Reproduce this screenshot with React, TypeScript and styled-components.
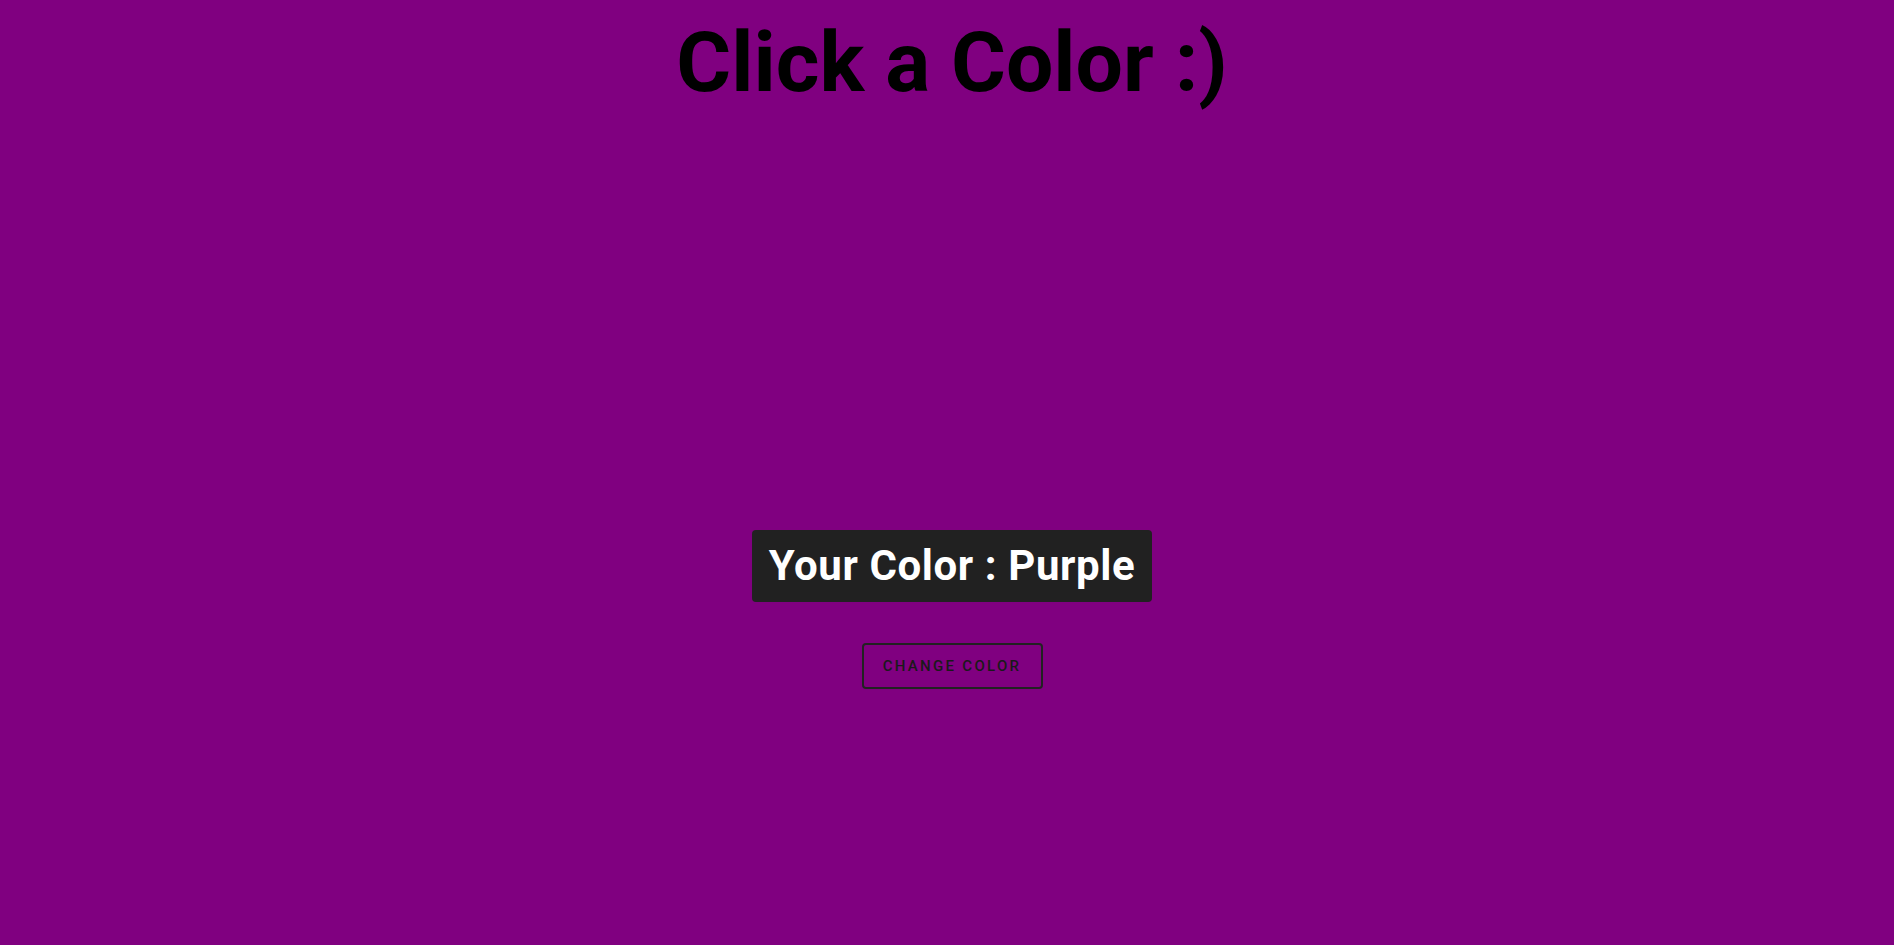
import styled, { createGlobalStyle } from 'styled-components';

const GlobalStyle = createGlobalStyle`
	html, body {
		margin: 0;
		padding: 0;
	}

	body {
		background-color: purple;
		font-family: Roboto, 'Liberation Sans', sans-serif;
	}
`;

const Page = styled.div`
	min-height: 100vh;
	box-sizing: border-box;
	padding-left: 10px;
	display: flex;
	flex-direction: column;
	align-items: center;
	background-color: purple;
`;

const Title = styled.h1`
	margin: 13px 0 0;
	font-size: 84px;
	font-weight: 700;
	line-height: 1.2;
	color: #000;
`;

const Panel = styled.div`
	margin-top: 416px;
	display: flex;
	flex-direction: column;
	align-items: center;
	gap: 41px;
`;

const Label = styled.div`
	background-color: #212121;
	color: #fff;
	border-radius: 4px;
	padding: 0 17px;
	height: 72px;
	display: flex;
	align-items: center;
	font-size: 42px;
	font-weight: 700;
	letter-spacing: 0.6px;
`;

const Button = styled.button`
	width: 181px;
	height: 46px;
	border: 2px solid #222;
	border-radius: 4px;
	background: transparent;
	color: #1a1a1a;
	font-family: Roboto, 'Liberation Sans', sans-serif;
	font-size: 15px;
	font-weight: 500;
	letter-spacing: 2.3px;
	text-transform: uppercase;
	cursor: pointer;
`;

function App() {
	return (
		<Page>
			<GlobalStyle />
			<Title>Click a Color :)</Title>
			<Panel>
				<Label>Your Color : Purple</Label>
				<Button>Change Color</Button>
			</Panel>
		</Page>
	);
}

export default App;
